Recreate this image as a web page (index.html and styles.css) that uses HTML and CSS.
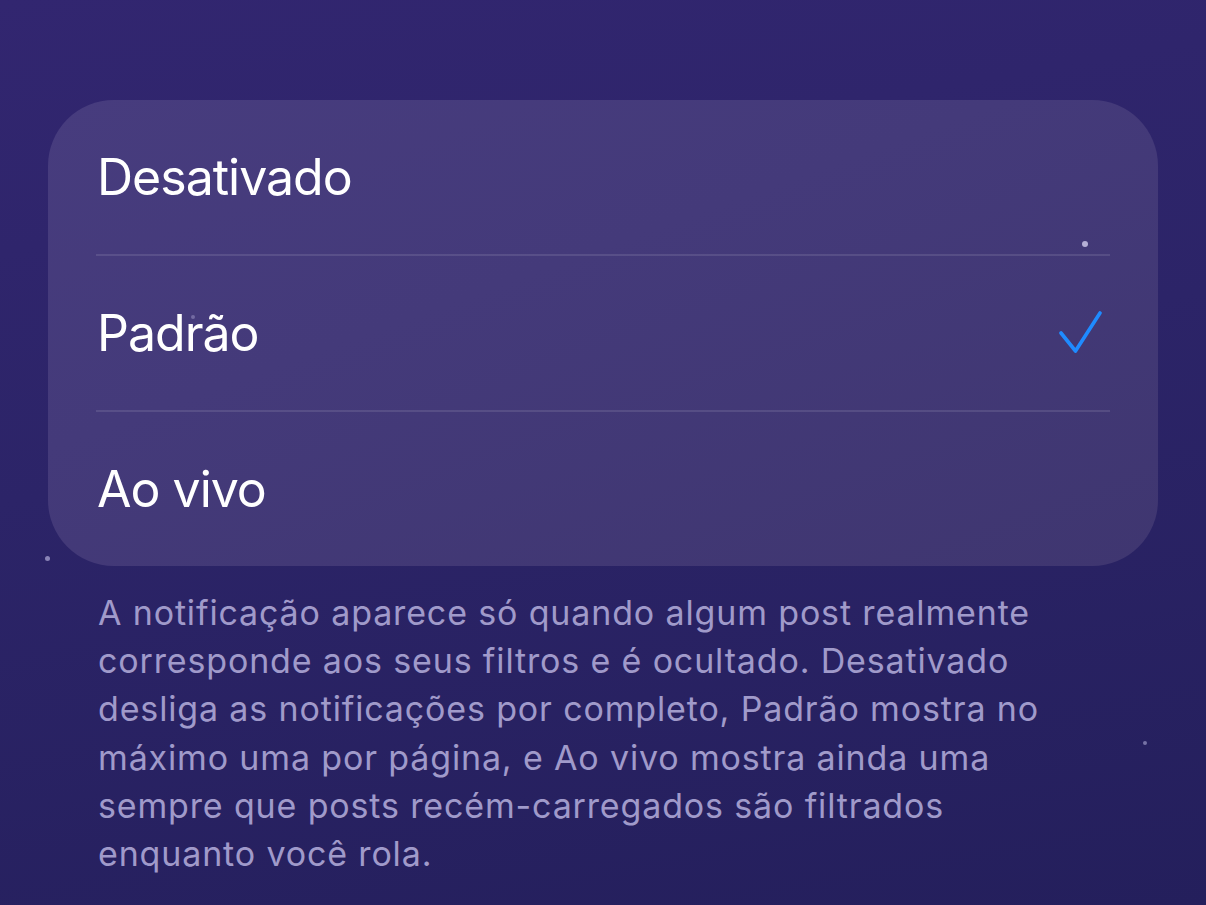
FILE: index.html
```html
<!DOCTYPE html>
<html lang="pt-BR">
<head>
<meta charset="utf-8">
<title>Notificações</title>
<link rel="stylesheet" href="styles.css">
</head>
<body>
<div class="screen">
  <span class="star s1"></span>
  <span class="star s2"></span>
  <span class="star s3"></span>
  <span class="star s4"></span>
  <div class="card">
    <div class="row"><span class="label">Desativado</span></div>
    <div class="sep"></div>
    <div class="row"><span class="label">Padrão</span>
      <svg class="check" width="46" height="46" viewBox="0 0 46 46" aria-hidden="true">
        <path d="M3 22 L17.5 40 L42 2" fill="none" stroke="#1f8bff" stroke-width="3.6" stroke-linecap="round" stroke-linejoin="round"/>
      </svg>
    </div>
    <div class="sep"></div>
    <div class="row"><span class="label">Ao vivo</span></div>
  </div>
  <p class="note">A notificação aparece só quando algum post realmente<br>corresponde aos seus filtros e é ocultado. Desativado<br>desliga as notificações por completo, Padrão mostra no<br>máximo uma por página, e Ao vivo mostra ainda uma<br>sempre que posts recém-carregados são filtrados<br>enquanto você rola.</p>
</div>
</body>
</html>
```
FILE: styles.css
```css
html, body {
  margin: 0;
  padding: 0;
}
body {
  width: 1206px;
  height: 905px;
  overflow: hidden;
  font-family: Inter, "Noto Sans", sans-serif;
  background: linear-gradient(170deg, #322670 0%, #2c2468 45%, #241f5c 100%);
}
.screen {
  position: relative;
  width: 1206px;
  height: 905px;
  padding-top: 100px;
  box-sizing: border-box;
}
.card {
  margin-left: 48px;
  width: 1110px;
  border-radius: 66px;
  background: linear-gradient(160deg, #473c7e 0%, #443a7a 40%, #3f3670 100%);
  display: flex;
  flex-direction: column;
}
.row {
  height: 154px;
  display: flex;
  align-items: center;
  justify-content: space-between;
  padding: 0 54px 0 49px;
}
.label {
  color: #ffffff;
  font-size: 50px;
  letter-spacing: -1px;
  line-height: 1;
}
.check {
  display: block;
  margin-top: 2px;
}
.sep {
  height: 2px;
  margin: 0 48px;
  background: rgba(255, 255, 255, 0.11);
}
.note {
  margin: 23px 0 0 98px;
  color: #a09aca;
  font-size: 34px;
  line-height: 48.2px;
  letter-spacing: 0.85px;
}
.star {
  position: absolute;
  width: 6px;
  height: 6px;
  border-radius: 50%;
  background: rgba(220, 215, 245, 0.75);
}
.s1 { left: 1082px; top: 241px; }
.s2 { left: 45px; top: 556px; width: 5px; height: 5px; background: rgba(200, 195, 235, 0.6); }
.s3 { left: 1143px; top: 741px; width: 4px; height: 4px; background: rgba(200, 195, 235, 0.5); }
.s4 { left: 191px; top: 315px; width: 4px; height: 4px; background: rgba(200, 195, 235, 0.35); }
```
